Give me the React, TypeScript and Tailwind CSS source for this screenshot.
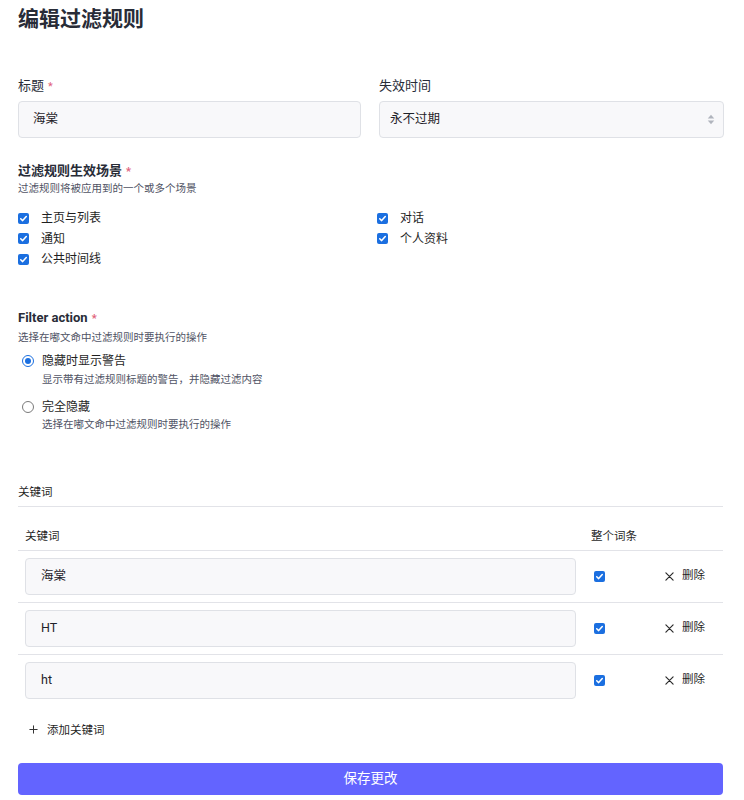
import React from "react";

const font = { fontFamily: 'Roboto, "Noto Sans CJK SC", sans-serif' };

function Check({ checked = true }: { checked?: boolean }) {
  return (
    <span
      className={`inline-flex h-[11px] w-[11px] shrink-0 items-center justify-center rounded-[2px] ${
        checked ? "bg-[#1b6fe0]" : "border border-[#767676] bg-white"
      }`}
    >
      {checked && (
        <svg viewBox="0 0 12 12" className="h-[9px] w-[9px]">
          <path d="M2.3 6.3 L4.9 8.8 L9.7 3.4" fill="none" stroke="#fff" strokeWidth="2" strokeLinecap="round" strokeLinejoin="round" />
        </svg>
      )}
    </span>
  );
}

function Radio({ checked }: { checked: boolean }) {
  return checked ? (
    <span className="inline-flex h-[12px] w-[12px] shrink-0 items-center justify-center rounded-full border-[1.5px] border-[#1b6fe0] bg-white">
      <span className="h-[6px] w-[6px] rounded-full bg-[#1b6fe0]" />
    </span>
  ) : (
    <span className="inline-block h-[12px] w-[12px] shrink-0 rounded-full border border-[#7a7a7a] bg-white" />
  );
}

function Req() {
  return <span className="ml-[4px] text-[11px] leading-none text-[#e0607a]">*</span>;
}

const scenes: [string[], string[]] = [
  ["主页与列表", "通知", "公共时间线"],
  ["对话", "个人资料"],
];

const keywords = ["海棠", "HT", "ht"];

export default function App() {
  return (
    <div className="min-h-[800px] bg-white pl-[18px] pr-[21px] pt-[5px] text-[#282c37]" style={font}>
      <h1 className="text-[21px] font-bold leading-[28px] text-[#282c37]">编辑过滤规则</h1>

      {/* title + expiry */}
      <div className="mt-[44px] grid grid-cols-[343px_345px] gap-x-[18px]">
        <div>
          <div className="h-[18px] text-[13px] leading-[18px]">
            标题
            <Req />
          </div>
          <div className="mt-[6px] flex h-[37px] items-center rounded-[4px] border border-[#dfe1e6] bg-[#f8f8fa] pl-[14px] text-[12.5px] text-[#1f2229]">
            海棠
          </div>
        </div>
        <div>
          <div className="h-[18px] text-[13px] leading-[18px]">失效时间</div>
          <div className="mt-[6px] flex h-[37px] items-center justify-between rounded-[4px] border border-[#dfe1e6] bg-[#f8f8fa] pl-[10px] pr-[7px] text-[12.5px] text-[#1f2229]">
            <span>永不过期</span>
            <svg viewBox="0 0 10 14" className="h-[13px] w-[10px]">
              <path d="M1.5 5.8 L5 2 L8.5 5.8 Z" fill="#b0b4bd" />
              <path d="M1.5 8.2 L5 12 L8.5 8.2 Z" fill="#b0b4bd" />
            </svg>
          </div>
        </div>
      </div>

      {/* contexts */}
      <div className="mt-[24px] h-[18px] text-[13px] font-bold leading-[18px]">
        过滤规则生效场景
        <Req />
      </div>
      <div className="mt-[1px] text-[10.5px] leading-[16px] text-[#4f5364]">过滤规则将被应用到的一个或多个场景</div>
      <div className="mt-[11px] grid grid-cols-[359px_1fr]">
        {scenes.map((col, ci) => (
          <div key={ci} className="flex flex-col">
            {col.map((s) => (
              <label key={s} className="flex h-[20.5px] items-center gap-[12px] text-[12px] text-[#1f1f1f]">
                <Check />
                <span>{s}</span>
              </label>
            ))}
          </div>
        ))}
      </div>

      {/* filter action */}
      <div className="mt-[39px] h-[18px] text-[13px] font-bold leading-[18px]">
        Filter action
        <Req />
      </div>
      <div className="mt-[3px] text-[10.5px] leading-[16px] text-[#4f5364]">选择在嘟文命中过滤规则时要执行的操作</div>
      <div className="mt-[6px] pl-[4px]">
        <div className="flex items-center gap-[8px] text-[12px] leading-[18px] text-[#1f1f1f]">
          <Radio checked />
          <span>隐藏时显示警告</span>
        </div>
        <div className="mt-[2px] pl-[20px] text-[10.5px] leading-[16px] text-[#4f5364]">
          显示带有过滤规则标题的警告，并隐藏过滤内容
        </div>
        <div className="mt-[10px] flex items-center gap-[8px] text-[12px] leading-[18px] text-[#1f1f1f]">
          <Radio checked={false} />
          <span>完全隐藏</span>
        </div>
        <div className="mt-[1px] pl-[20px] text-[10.5px] leading-[16px] text-[#4f5364]">
          选择在嘟文命中过滤规则时要执行的操作
        </div>
      </div>

      {/* keywords */}
      <div className="mt-[50px] border-b border-[#e2e3e8] pb-[5px] text-[11.5px] leading-[18px] text-[#1f1f1f]">关键词</div>
      <div>
        <div className="flex border-b border-[#e2e3e8] pb-[6px] pt-[21px] text-[11.5px] leading-[16px] text-[#1f1f1f]">
          <div className="w-[565px] pl-[7px]">关键词</div>
          <div className="w-[72px] pl-[8px]">整个词条</div>
          <div className="flex-1" />
        </div>
        {keywords.map((k, i) => (
          <div
            key={k}
            className={`flex items-center pb-[7px] pt-[7px] ${i < keywords.length - 1 ? "border-b border-[#e2e3e8]" : ""}`}
          >
            <div className="w-[565px] pl-[7px] pr-[7px]">
              <div className="flex h-[37px] items-center rounded-[4px] border border-[#dfe1e6] bg-[#f8f8fa] pl-[15px] text-[12.5px] text-[#1f2229]">
                {k}
              </div>
            </div>
            <div className="flex w-[72px] pl-[11px]">
              <Check />
            </div>
            <div className="flex flex-1 items-center gap-[8px] pl-[10px] text-[11.5px] text-[#1f1f1f]">
              <svg viewBox="0 0 10 10" className="h-[9px] w-[9px]">
                <path d="M1 1 L9 9 M9 1 L1 9" stroke="#2a2a2a" strokeWidth="1.3" strokeLinecap="round" />
              </svg>
              <span>删除</span>
            </div>
          </div>
        ))}
      </div>

      <div className="mt-[15px] flex items-center gap-[9px] pl-[11px] text-[11.5px] leading-[18px] text-[#1f1f1f]">
        <svg viewBox="0 0 10 10" className="h-[9px] w-[9px]">
          <path d="M5 0.5 V9.5 M0.5 5 H9.5" stroke="#333" strokeWidth="1.1" />
        </svg>
        <span>添加关键词</span>
      </div>

      <button className="mt-[24px] flex h-[32px] w-full items-center justify-center rounded-[4px] bg-[#6364ff] text-[13.5px] text-white">
        保存更改
      </button>
    </div>
  );
}
